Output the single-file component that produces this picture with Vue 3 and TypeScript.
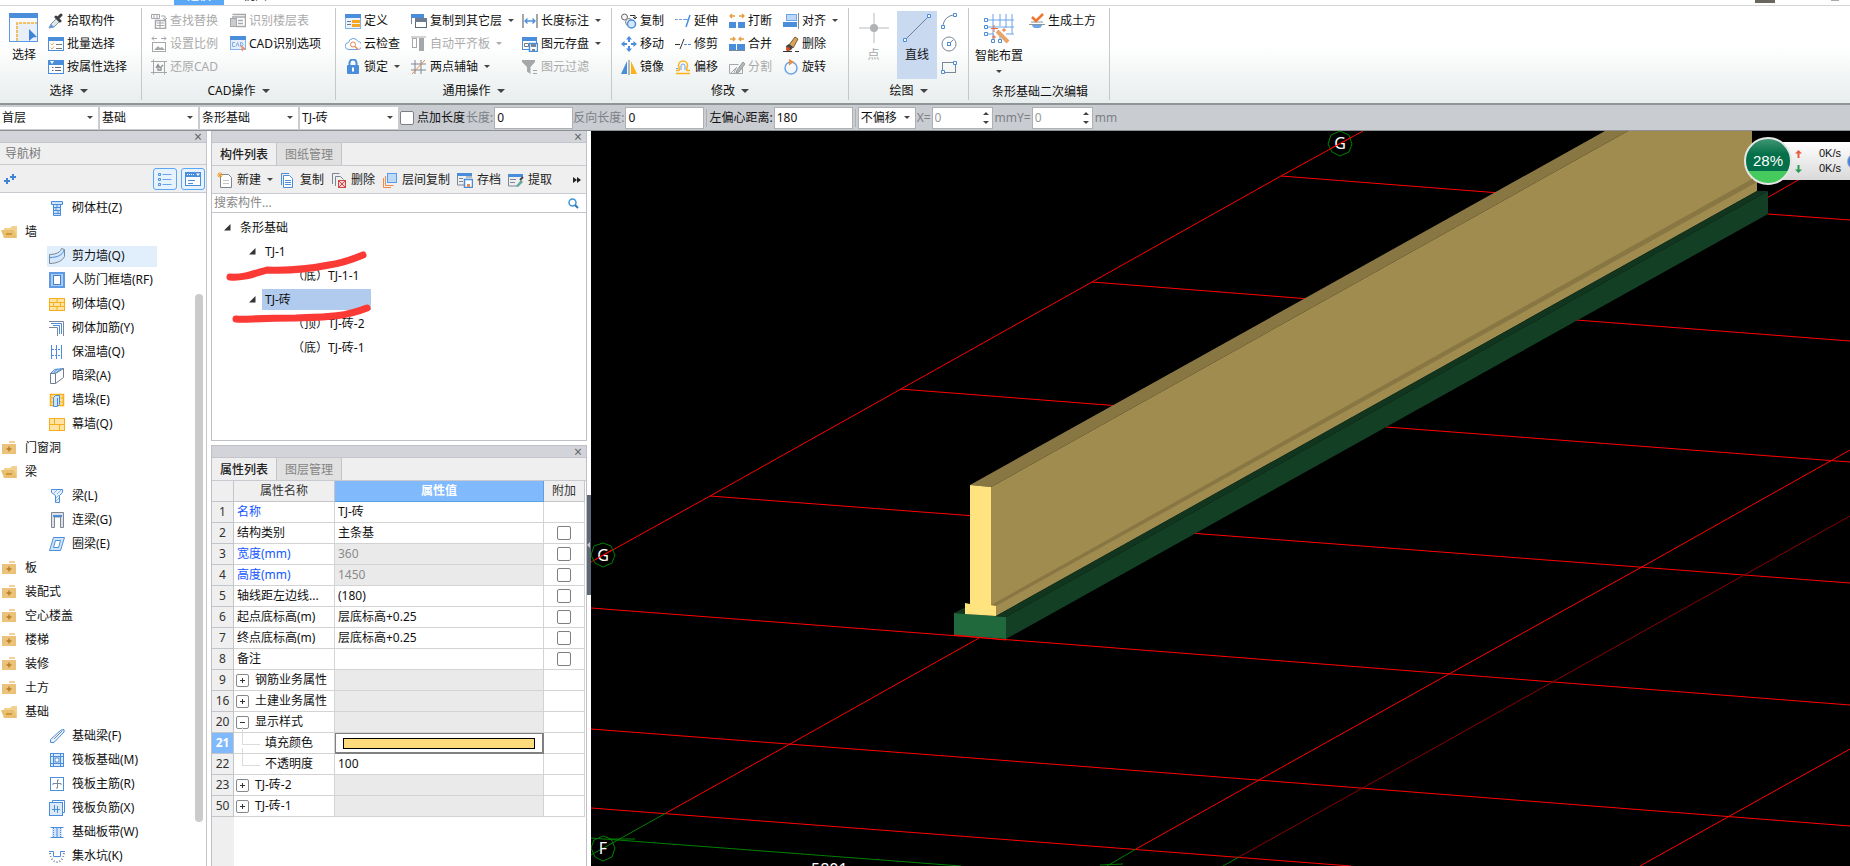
<script setup lang="ts">
import { ref } from 'vue'

interface Tool { icon: string; label: string; off?: boolean; caret?: boolean }
interface NavItem { label: string; icon: string; folder?: boolean; active?: boolean }
interface Prop {
  no: number
  name: string
  value?: string
  kind?: 'closed' | 'open' | 'child'
  blue?: boolean
  locked?: boolean
  check?: boolean
  swatch?: boolean
}

const B = '#4a8edb'
const G = '#a5a7aa'

const icons: Record<string, string> = {
  picker: `<path d="M1 15l2-4 6-6 3 3-6 6z" fill="#dfe7ee" stroke="#8a9299"/><path d="M1 15l2-4 3 3z" fill="#5b9ae6"/><path d="M8 4l4 4M9.500 5.500L13 2" stroke="#3b3f45" stroke-width="3" stroke-linecap="round"/>`,
  batch: `<rect x=".5" y="1.500" width="15" height="13" fill="#fff" stroke="${B}"/><path d="M0 1h16v4H0z" fill="${B}"/><path d="M2.500 7.500l1.500 1.500 2-2.500M2.500 11.500L4 13l2-2.500" fill="none" stroke="#f0a64a"/><path d="M8 8.500h6M8 12.500h6" stroke="#777"/>`,
  attr: `<rect x=".5" y="1.500" width="15" height="13" fill="#fff" stroke="${B}"/><path d="M0 1h16v5H0z" fill="${B}"/><path d="M2 2h4L4 5z" fill="#fff"/><path d="M4 8.500h1.500M7 8.500h6M4 11.500h1.500M7 11.500h6" stroke="#667"/>`,
  find: `<path d="M.5 1.500h8v4h-8zM3 1.500v4M6 1.500v4M10 3h4v3M12 5l2 2 2-2" fill="none" stroke="${G}"/><rect x="4.500" y="7.500" width="10" height="8" fill="#fff" stroke="${G}" stroke-width="1.500"/><path d="M6 10h7M6 12.500h7M9 8v7" stroke="${G}"/>`,
  scale: `<path d="M1 2.500h5M10 2.500h5M3 .5l-2 2 2 2M13 .5l2 2-2 2" fill="none" stroke="${G}"/><rect x="1.500" y="6.500" width="13" height="9" fill="#fff" stroke="${G}"/><path d="M3 14l4-4 2 2 2-1 3 3z" fill="${G}"/>`,
  restore: `<path d="M2.500.5v15M0 2.500h16M13.500 2v13.500M0 13.500h16" stroke="${G}"/><path d="M5 9l2-3.500L9 9M7 6v5h3V8l2-2" fill="none" stroke="#8d8f92" stroke-width="1.300"/>`,
  floors: `<path d="M2.500 1.500h13v12h-9M2 4h13" fill="none" stroke="${G}" stroke-width="1.500"/><rect x=".5" y="5.500" width="6" height="8" fill="#c9cbcd" stroke="${G}"/><path d="M8 7.500h5M8 10.500h5" stroke="${G}" stroke-width="1.500"/>`,
  cadopt: `<rect x=".5" y=".5" width="15" height="13" fill="#e4effb" stroke="#86b4ea"/><path d="M0 0h16v4H0z" fill="${B}"/><path d="M5 6.500H2.500v4H5M6 10.500L7.500 6.500 9 10.500M10.500 6.500v4h1.500l1-2-1-2z" fill="none" stroke="#86aee0"/><path d="M11 9l5 4-2.500.5L12 16z" fill="#f58f63"/>`,
  define: `<rect x=".5" y="1.500" width="15" height="14" fill="#eaf2fc" stroke="#86b4ea"/><path d="M0 1h16v4H0z" fill="${B}"/><path d="M2 8.500h4M2 11.500h4" stroke="#777"/><path d="M7 7h8v3H7zM7 11h8v3H7z" fill="#f5a623"/>`,
  cloud: `<path d="M4 13.500a3.500 3.500 0 0 1-.5-7A5 5 0 0 1 13 5.500a4 4 0 0 1-1 8z" fill="#fff" stroke="#6ba4e8"/><circle cx="8" cy="8.500" r="2.500" fill="none" stroke="#f0894a"/><path d="M10 10.500l3 3" stroke="#f0894a" stroke-width="1.500"/>`,
  lock: `<path d="M4.500 7V4a3.500 3.500 0 0 1 7 0v3" fill="none" stroke="${B}" stroke-width="2"/><rect x="2" y="6" width="12" height="9" rx="1" fill="${B}"/><path d="M7 8.500h2v4H7z" fill="#fff"/>`,
  copylayer: `<path d="M.5 11V1.500h12V4" fill="none" stroke="#7a8796"/><path d="M0 1h13v4H0z" fill="${B}"/><rect x="4.500" y="5.500" width="11" height="9" fill="#fff" stroke="#5b6a7b"/><path d="M4 5h12v4H4z" fill="#6d7c8e"/>`,
  alignslab: `<rect x="1.500" y="2.500" width="4" height="9" fill="none" stroke="${G}"/><path d="M0 1h15" stroke="${G}"/><rect x="8" y="2" width="5" height="13" fill="${G}"/>`,
  aux: `<path d="M4 1v14M10 1v14M0 5h15M0 11h15" stroke="#7b8794"/><path d="M1 15L14 1" stroke="#f0894a"/>`,
  dim: `<path d="M1 1v14M15 1v14" stroke="#777" stroke-width="1.300"/><path d="M3 8h10M5.500 5.500L3 8l2.500 2.500M10.500 5.500L13 8l-2.500 2.500" fill="none" stroke="${B}" stroke-width="1.300"/>`,
  store: `<rect x=".5" y="1.500" width="14" height="12" fill="#fff" stroke="${B}"/><path d="M0 1h15v4H0z" fill="${B}"/><path d="M2.500 7.500h4v3h-4z" fill="none" stroke="#777"/><rect x="7.500" y="7.500" width="8" height="8" fill="#fff" stroke="${B}" stroke-width="1.500"/><path d="M9 8h5v3H9zM10 13h3v2h-3z" fill="#74869a"/>`,
  filter: `<path d="M0 1h13v2L8.500 8v7L5 12.500V8L0 3z" fill="${G}"/><path d="M11 11.500h4M11 14.500h4" stroke="${G}"/>`,
  mcopy: `<circle cx="3.500" cy="4" r="3" fill="#f5f5f5" stroke="#666"/><path d="M9 2.500h5v3M12 4l2 2 2-2" fill="none" stroke="#333"/><circle cx="8" cy="9" r="3.500" fill="#e8eef4" stroke="#888"/><circle cx="10.500" cy="11" r="4" fill="#d5e8fb" stroke="${B}" stroke-width="1.500"/>`,
  move: `<path d="M8 0l3 3.500H9V6H7V3.500H5zM8 16l3-3.500H9V10H7v2.500H5zM0 8l3.500-3v2H6v2H3.500v2zM16 8l-3.500-3v2H10v2h2.500v2z" fill="${B}"/>`,
  mirror: `<path d="M6 2v13H0z" fill="${B}"/><path d="M8 1v15" stroke="#777"/><path d="M10 2v13h6z" fill="#fbb216"/>`,
  extend: `<path d="M0 6.500h3M4 6.500h3" stroke="#7fa0c4"/><path d="M8 6.500h5" stroke="#6aa2e5"/><path d="M15 2l-4 12" stroke="#4a8edb" stroke-width="1.500"/>`,
  trim: `<path d="M0 8.500h5" stroke="#333"/><path d="M9 8.500h3M13 8.500h3" stroke="${B}"/><path d="M9 3L5 13" stroke="#333"/>`,
  offset: `<path d="M1 14.500h14M1 11.500h3c1-2 0-3-.5-5a4.500 4.500 0 0 1 9 0c0 2-1.500 3-.5 5h3" fill="none" stroke="#fbb216" stroke-width="1.500"/><path d="M1 9.500h2M6 11V7a2 2 0 0 1 4 0v4" fill="none" stroke="#6ba4e8"/>`,
  brk: `<path d="M6 3H1M3 1L1 3l2 2M10 3h5M13 1l2 2-2 2" fill="none" stroke="#e89c3c" stroke-width="1.300"/><path d="M0 9h7v6H0zM9 9h7v6H9z" fill="${B}"/>`,
  merge: `<path d="M1 3h5M4 1l2 2-2 2M15 3h-5M12 1l-2 2 2 2" fill="none" stroke="#e89c3c" stroke-width="1.300"/><path d="M0 8h7v6H0zM8 8h8v6H8z" fill="${B}"/><path d="M0 14.500h16" stroke="#7b8794"/>`,
  split: `<path d="M.5 5.500h9M.5 5.500v9h13v-6M2 14l6-6M5 14l2-5" fill="none" stroke="${G}"/><path d="M8 11l-1 3 3-1 6-8-2-2z" fill="#b5b7ba" stroke="#999"/>`,
  align: `<rect x="3.500" y="1.500" width="10" height="6" fill="#bcd7f7" stroke="#6ba4e8"/><path d="M0 9h14v5H0z" fill="${B}"/><path d="M15.500 0v16" stroke="#888"/>`,
  erase: `<path d="M0 15.500h9M12 15.500h4" stroke="#333"/><path d="M6 9l6-8 3 2-5 9z" fill="#d9a35a" stroke="#7b5a32"/><path d="M3 10l3-2 4 3-2 3-4 1z" fill="#444"/><circle cx="5" cy="13" r="2" fill="#d84a20"/>`,
  rotate: `<circle cx="8" cy="9" r="6" fill="none" stroke="#6ba4e8" stroke-width="1.500"/><path d="M6 0l5 3-5 3.500z" fill="#f08a3c"/>`,
  arc: `<path d="M2 14C2 7 7 2 14 2" fill="none" stroke="#6d7f95"/><path d="M.5 12.500h3v3h-3zM12.500.5h3v3h-3z" fill="#fff" stroke="${B}"/>`,
  circle: `<circle cx="8" cy="8" r="7" fill="none" stroke="#7b8794"/><path d="M8 8l4-4" stroke="#7b8794"/><rect x="6.500" y="6.500" width="3" height="3" fill="#fff" stroke="${B}"/>`,
  rect: `<rect x="1.500" y="3.500" width="13" height="10" fill="none" stroke="#7b8794"/><path d="M.5 11.500h3v3h-3zM12.500 2.500h3v3h-3z" fill="#fff" stroke="${B}"/>`,
  earth: `<path d="M2 9h12M0 11.500h16" stroke="#8a949e"/><path d="M3 12h10c-1 3-2 3-5 3s-4 0-5-3z" fill="#6ba4e8"/><path d="M3 4l4 4 7-7" fill="none" stroke="#ee7430" stroke-width="2.500"/>`,
  folderOpen: `<path d="M3 4l6 0 2-2h5v11H4z" fill="#f3d08d"/><path d="M0 6h13l3 8H3z" fill="#e9bf70"/><path d="M5 10h6" stroke="#c38c2c" stroke-width="1.500"/>`,
  folder: `<path d="M8 1h6v2H8z" fill="#f0d29a"/><path d="M1 4h14v10H1z" fill="#ecc27b"/><path d="M8 6.500v5M5.500 9h5" stroke="#b57f26" stroke-width="1.500"/>`,
  column: `<path d="M2.500 1.500h11v3h-11zM4.500 4.500h7v11h-7z" fill="#cfe3f9" stroke="${B}"/><path d="M5 7.500h6M5 10.500h6M5 13.500h6M8 5v2M7 8v2M9 11v2" stroke="${B}"/>`,
  shear: `<path d="M.5 6.500C7 6.500 12 4 12.500.5l3 1v7c-2 4-7 7-15 7z" fill="#d5e7fb" stroke="#7b8794"/><path d="M1 9.500C8 9.500 14 7 15 2" fill="none" stroke="${B}"/>`,
  frame: `<path d="M1 1h14v14H1z" fill="#a9ccf5" stroke="#5e9be4" stroke-width="2"/><rect x="4.500" y="3.500" width="7" height="9" fill="#fff" stroke="#4a7fc4"/>`,
  brick: `<rect x=".5" y="2.500" width="15" height="12" fill="#fde3a4" stroke="#f7ae18"/><path d="M0 6.500h16M0 10.500h16M8 3v3M4.500 7v3M11.500 7v3M8 11v3" stroke="#f7ae18"/>`,
  rebar: `<path d="M0 1.500h14.500V16M0 7.500h8.500V16" fill="none" stroke="#7b8794"/><path d="M2 3.500h10.500V14M4 5.500h6.500V14" fill="none" stroke="${B}"/>`,
  insul: `<path d="M2.500 1v14M7.500 1v14M12.500 1v14" stroke="${B}"/><path d="M3 5.500h10M3 11.500h10" stroke="${B}" stroke-dasharray="2 1"/>`,
  hidden: `<path d="M1.500 5.500l4-4 9-1-4 4z" fill="#cfe3f9" stroke="${B}"/><path d="M1.500 5.500h5v10h-5zM6.500 5.500l8-5v9l-8 6" fill="#fff" stroke="#6f7f92"/><path d="M5 4l4-3M8 4l4-3" stroke="${B}"/>`,
  pier: `<rect x="1.500" y="2.500" width="13" height="11" fill="#fde3a4" stroke="#f7ae18" stroke-width="1.500"/><path d="M1 6h14M1 10h14" stroke="#f7ae18"/><path d="M4.500 5.500l2-2h4v9l-2 2h-4z" fill="#cfe3f9" stroke="${B}"/><path d="M8.500 6v8" stroke="${B}"/>`,
  curtain: `<rect x=".5" y="2.500" width="15" height="12" fill="#fde3a4" stroke="#f7ae18"/><path d="M0 8.500h16M5.500 3v5M10.500 9v5" stroke="#f7ae18"/>`,
  beam: `<path d="M2.500 1.500h11v3l-3 3v7h-4v-7l-4-3z" fill="#e6f0fc" stroke="${B}"/><path d="M5 5l3-3M8 6l4-4M7 10l3-3M7 13l3-3" stroke="#8ab6ec"/>`,
  lintel: `<path d="M2.500.5h12v15h-3V5h-6v10.500h-3z" fill="#dfe1e4" stroke="#7b8794"/><path d="M4 3h9v2H4z" fill="${B}"/>`,
  ring: `<path d="M4.500 1.500h11l-4 13H.5zM6.500 4.500h5l-2 7h-5z" fill="#cfe3f9" fill-rule="evenodd" stroke="${B}"/>`,
  fbeam: `<path d="M1.500 11.500L12 2l3-.5V4L5 14.500H1.500z" fill="#e6f0fc" stroke="${B}"/><path d="M5 11l8-8" stroke="#7b8794"/>`,
  raft: `<rect x="1.500" y="1.500" width="13" height="13" fill="#dbe9fa" stroke="${B}"/><path d="M1 4.500h14M1 11.500h14M4.500 1v13M11.500 1v13" stroke="${B}"/><rect x="6" y="6" width="4" height="4" fill="#fff" stroke="${B}"/>`,
  raftm: `<rect x="1.500" y="1.500" width="13" height="13" fill="#fff" stroke="${B}"/><path d="M4 9V7.500h8V9M7 12h1.500V4H10" fill="none" stroke="#7b8794"/>`,
  raftn: `<path d="M3.500 2V.5h12v12H14" fill="none" stroke="${B}"/><rect x=".5" y="2.500" width="13" height="13" fill="#dbe9fa" stroke="${B}"/><path d="M3 9.500h8M5.500 5v7M8.500 6v7" stroke="${B}"/>`,
  band: `<path d="M3 4h10v9H3z" fill="#d3e4f8"/><path d="M1.500 3.500h13M1.500 13.500h13M8 4v9" stroke="${B}"/><path d="M4.500 4v9M11.500 4v9" stroke="${B}" stroke-dasharray="1 1"/>`,
  pit: `<path d="M0 3.500h4.500v5h7v-5H16" fill="none" stroke="${B}"/><path d="M1 5c1 7 4 9 7 9s6-2 7-9" fill="none" stroke="#7b8794" stroke-dasharray="1 2" stroke-width="2"/>`,
  create: `<path d="M3.500 2.500h8l3 3v10h-11z" fill="#fff" stroke="#7b8794"/><path d="M6 8.500h6M6 11.500h6" stroke="#c3c8ce"/><path d="M1 1l4 4M5 1L1 5M3 0v6M0 3h6" stroke="#f0a030"/>`,
  dup: `<path d="M1.500 13V1.500H9" fill="none" stroke="${B}"/><path d="M3.500 3.500h6l3 3v9h-9z" fill="#fff" stroke="${B}"/><path d="M5 8.500h6M5 10.500h6M5 12.500h6" stroke="${B}"/>`,
  del: `<path d="M1.500 12V1.500h7M4.500 14V4.500h5l3 3" fill="none" stroke="#7b8794"/><rect x="7.500" y="8.500" width="7" height="7" fill="#f7d4d4" stroke="#d04848"/><path d="M8 9l6 6M14 9l-6 6" stroke="#d04848"/>`,
  layercopy: `<path d="M1.500 6v9.500H9M3.500 4v9.500h8" fill="none" stroke="#f0894a"/><rect x="5.500" y="1.500" width="9" height="9" fill="#bddafb" stroke="#5b9ae6"/>`,
  archive: `<path d="M0 1h15v3H0z" fill="${B}"/><path d="M.5 4v9h7M2 6.500h4M2 9.500h4M9 5h6" fill="none" stroke="#7b8794"/><rect x="7.500" y="7.500" width="8" height="8" fill="#fff" stroke="${B}" stroke-width="1.500"/><path d="M10 12h3v3h-3z" fill="#f0894a"/>`,
  extract: `<path d="M0 2h15v3H0z" fill="${B}"/><path d="M.5 5v9h9M2 7.500h6M2 10.500h5" fill="none" stroke="#7b8794"/><path d="M8 14l5-6 2 2-5 5z" fill="#5fa79c"/><path d="M12 8l3-3" stroke="#444" stroke-width="2"/>`,
}

const selectTools: Tool[] = [
  { icon: 'picker', label: '拾取构件' },
  { icon: 'batch', label: '批量选择' },
  { icon: 'attr', label: '按属性选择' },
]
const cadTools: Tool[] = [
  { icon: 'find', label: '查找替换', off: true },
  { icon: 'scale', label: '设置比例', off: true },
  { icon: 'restore', label: '还原CAD', off: true },
  { icon: 'floors', label: '识别楼层表', off: true },
  { icon: 'cadopt', label: 'CAD识别选项' },
]
const commonTools: Tool[] = [
  { icon: 'define', label: '定义' },
  { icon: 'cloud', label: '云检查' },
  { icon: 'lock', label: '锁定', caret: true },
  { icon: 'copylayer', label: '复制到其它层', caret: true },
  { icon: 'alignslab', label: '自动平齐板', off: true, caret: true },
  { icon: 'aux', label: '两点辅轴', caret: true },
  { icon: 'dim', label: '长度标注', caret: true },
  { icon: 'store', label: '图元存盘', caret: true },
  { icon: 'filter', label: '图元过滤', off: true },
]
const editTools: Tool[] = [
  { icon: 'mcopy', label: '复制' },
  { icon: 'move', label: '移动' },
  { icon: 'mirror', label: '镜像' },
  { icon: 'extend', label: '延伸' },
  { icon: 'trim', label: '修剪' },
  { icon: 'offset', label: '偏移' },
  { icon: 'brk', label: '打断' },
  { icon: 'merge', label: '合并' },
  { icon: 'split', label: '分割', off: true },
  { icon: 'align', label: '对齐', caret: true },
  { icon: 'erase', label: '删除' },
  { icon: 'rotate', label: '旋转' },
]
const shapeTools = [
  { icon: 'arc', label: '弧' },
  { icon: 'circle', label: '圆' },
  { icon: 'rect', label: '矩形' },
]
const partTools: Tool[] = [
  { icon: 'create', label: '新建', caret: true },
  { icon: 'dup', label: '复制' },
  { icon: 'del', label: '删除' },
  { icon: 'layercopy', label: '层间复制' },
  { icon: 'archive', label: '存档' },
  { icon: 'extract', label: '提取' },
]

const combos = [
  { label: '楼层', value: '首层' },
  { label: '分类', value: '基础' },
  { label: '构件类型', value: '条形基础' },
  { label: '构件', value: 'TJ-砖' },
]

const folder = (label: string, open = false): NavItem => ({ label, icon: open ? 'folderOpen' : 'folder', folder: true })
const nav: NavItem[] = [
  { label: '砌体柱(Z)', icon: 'column' },
  folder('墙', true),
  { label: '剪力墙(Q)', icon: 'shear', active: true },
  { label: '人防门框墙(RF)', icon: 'frame' },
  { label: '砌体墙(Q)', icon: 'brick' },
  { label: '砌体加筋(Y)', icon: 'rebar' },
  { label: '保温墙(Q)', icon: 'insul' },
  { label: '暗梁(A)', icon: 'hidden' },
  { label: '墙垛(E)', icon: 'pier' },
  { label: '幕墙(Q)', icon: 'curtain' },
  folder('门窗洞'),
  folder('梁', true),
  { label: '梁(L)', icon: 'beam' },
  { label: '连梁(G)', icon: 'lintel' },
  { label: '圈梁(E)', icon: 'ring' },
  folder('板'),
  folder('装配式'),
  folder('空心楼盖'),
  folder('楼梯'),
  folder('装修'),
  folder('土方'),
  folder('基础', true),
  { label: '基础梁(F)', icon: 'fbeam' },
  { label: '筏板基础(M)', icon: 'raft' },
  { label: '筏板主筋(R)', icon: 'raftm' },
  { label: '筏板负筋(X)', icon: 'raftn' },
  { label: '基础板带(W)', icon: 'band' },
  { label: '集水坑(K)', icon: 'pit' },
]

const parts = [
  { label: '条形基础', depth: 0, open: true },
  { label: 'TJ-1', depth: 1, open: true },
  { label: '（底）TJ-1-1', depth: 2 },
  { label: 'TJ-砖', depth: 1, open: true, active: true },
  { label: '（顶）TJ-砖-2', depth: 2 },
  { label: '（底）TJ-砖-1', depth: 2 },
]

const props: Prop[] = [
  { no: 1, name: '名称', value: 'TJ-砖', blue: true },
  { no: 2, name: '结构类别', value: '主条基', check: true },
  { no: 3, name: '宽度(mm)', value: '360', blue: true, locked: true, check: true },
  { no: 4, name: '高度(mm)', value: '1450', blue: true, locked: true, check: true },
  { no: 5, name: '轴线距左边线...', value: '(180)', check: true },
  { no: 6, name: '起点底标高(m)', value: '层底标高+0.25', check: true },
  { no: 7, name: '终点底标高(m)', value: '层底标高+0.25', check: true },
  { no: 8, name: '备注', check: true },
  { no: 9, name: '钢筋业务属性', kind: 'closed', locked: true },
  { no: 16, name: '土建业务属性', kind: 'closed', locked: true },
  { no: 20, name: '显示样式', kind: 'open', locked: true },
  { no: 21, name: '填充颜色', kind: 'child', swatch: true },
  { no: 22, name: '不透明度', value: '100', kind: 'child' },
  { no: 23, name: 'TJ-砖-2', kind: 'closed', locked: true },
  { no: 50, name: 'TJ-砖-1', kind: 'closed', locked: true },
]

const redLines = [
  'M591 562L710 496L1092 282L1281 176L1363 131',
  'M1281 176L1500 193M1768 214L1850 220',
  'M1092 282L1310 299M1576 320L1850 341',
  'M900 389L1120 406M1386 427L1850 462',
  'M710 496L975 516M1190 533L1850 583',
  'M591 608L1090 646L1850 705',
  'M591 729L1090 767L1850 826',
  'M591 808L1090 846L1351 866',
  'M666 813L790 744L979 638M1765 199L1800 179',
  'M1136 849L1259 780L1449 674L1640 568L1850 450',
  'M1640 866L1850 749',
]

const search = ref('')
const addLength = ref(false)
</script>

<template>
  <div class="app">
    <nav class="menu">
      <button class="menu-tab on">建模</button>
      <button class="menu-tab">视图</button>
      <span class="menu-end"><i class="avatar"></i><i class="dots"></i></span>
    </nav>

    <header class="ribbon">
      <section class="group g-select">
        <div class="body">
          <button class="big">
            <svg width="30" height="30" viewBox="0 0 30 30"><rect x=".5" y=".5" width="28" height="28" fill="#e9eff8" stroke="#5b9ae6" /><path d="M0 0h29v5H0z" fill="#4a8edb" /><path d="M1 5h27v5H7v18H1z" fill="#f7f9fc" /><path d="M8 28V10h20" fill="none" stroke="#f5b32a" stroke-width="1.500" stroke-dasharray="3 1" /><path d="M20 16l8 8-4 .5-4 3.500z" fill="#3f84d8" /></svg>
            <span>选择</span>
          </button>
          <div class="tools">
            <button v-for="t in selectTools" :key="t.icon" class="tool">
              <svg width="16" height="16" viewBox="0 0 16 16" v-html="icons[t.icon]"></svg><span>{{ t.label }}</span>
            </button>
          </div>
        </div>
        <h2>选择 <i class="caret"></i></h2>
      </section>

      <section class="group g-cad">
        <div class="body">
          <div class="tools">
            <button v-for="t in cadTools" :key="t.icon" class="tool" :disabled="t.off">
              <svg width="16" height="16" viewBox="0 0 16 16" v-html="icons[t.icon]"></svg><span>{{ t.label }}</span>
            </button>
          </div>
        </div>
        <h2>CAD操作 <i class="caret"></i></h2>
      </section>

      <section class="group g-common">
        <div class="body">
          <div class="tools">
            <button v-for="t in commonTools" :key="t.icon" class="tool" :disabled="t.off">
              <svg width="16" height="16" viewBox="0 0 16 16" v-html="icons[t.icon]"></svg><span>{{ t.label }}</span><i v-if="t.caret" class="caret small"></i>
            </button>
          </div>
        </div>
        <h2>通用操作 <i class="caret"></i></h2>
      </section>

      <section class="group g-edit">
        <div class="body">
          <div class="tools">
            <button v-for="t in editTools" :key="t.icon" class="tool" :disabled="t.off">
              <svg width="16" height="16" viewBox="0 0 16 16" v-html="icons[t.icon]"></svg><span>{{ t.label }}</span><i v-if="t.caret" class="caret small"></i>
            </button>
          </div>
        </div>
        <h2>修改 <i class="caret"></i></h2>
      </section>

      <section class="group g-draw">
        <div class="body">
          <button class="big" disabled>
            <svg width="30" height="30" viewBox="0 0 30 30"><path d="M15 0v30M0 15h30" stroke="#b9bbbe" /><circle cx="15" cy="15" r="4" fill="#b0b2b5" /></svg>
            <span>点</span>
          </button>
          <button class="big on">
            <svg width="30" height="30" viewBox="0 0 30 30"><path d="M3 27L27 3" stroke="#6d7f95" /><path d="M1.500 25.500h3v3h-3zM25.500 1.500h3v3h-3z" fill="#fff" stroke="#4a8edb" /></svg>
            <span>直线</span>
          </button>
          <div class="shapes">
            <button v-for="s in shapeTools" :key="s.icon" class="tool" :aria-label="s.label">
              <svg width="16" height="16" viewBox="0 0 16 16" v-html="icons[s.icon]"></svg>
            </button>
          </div>
        </div>
        <h2>绘图 <i class="caret"></i></h2>
      </section>

      <section class="group g-second">
        <div class="body">
          <button class="big wide">
            <svg width="30" height="30" viewBox="0 0 30 30"><path d="M4 6h26M4 13h26M4 20h6M9 0v26M16 0v12M22 0v14M28 0v20M22 20h8M16 22v4" stroke="#6ba4e8" fill="none" /><path d="M.5 4.500h3v3h-3zM.5 11.500h3v3h-3zM.5 18.500h3v3h-3zM7.500 25.500h3v3h-3zM14.500 25.500h3v3h-3z" fill="#fff" stroke="#4a8edb" /><path d="M13 17l11 11" stroke="#e8a56a" stroke-width="4" /><path d="M10 11v7M7 14.500h7M20 14v4M18 16h4M10 21v4M8 23h4" stroke="#ee6a3a" /></svg>
            <span>智能布置</span><i class="caret small"></i>
          </button>
          <div class="tools">
            <button class="tool">
              <svg width="16" height="16" viewBox="0 0 16 16" v-html="icons.earth"></svg><span>生成土方</span>
            </button>
          </div>
        </div>
        <h2>条形基础二次编辑</h2>
      </section>
    </header>

    <div class="options">
      <span v-for="c in combos" :key="c.label" class="combo">
        <select :aria-label="c.label"><option>{{ c.value }}</option></select><i class="caret small"></i>
      </span>
      <label class="check"><input v-model="addLength" type="checkbox" />点加长度</label>
      <label class="dim" for="len">长度:</label><input id="len" class="field" value="0" />
      <label class="dim" for="rlen">反向长度:</label><input id="rlen" class="field" value="0" />
      <i class="bar"></i>
      <label for="ecc">左偏心距离:</label><input id="ecc" class="field" value="180" />
      <i class="bar"></i>
      <span class="combo short">
        <select aria-label="偏移方式"><option>不偏移</option></select><i class="caret small"></i>
      </span>
      <label class="dim" for="ox">X=</label>
      <span class="spin"><input id="ox" type="number" value="0" disabled /><span><i class="up"></i><i class="caret small"></i></span></span>
      <span class="dim">mm</span>
      <label class="dim" for="oy">Y=</label>
      <span class="spin"><input id="oy" type="number" value="0" disabled /><span><i class="up"></i><i class="caret small"></i></span></span>
      <span class="dim">mm</span>
    </div>

    <main class="work">
      <aside class="side">
        <div class="grip"><button aria-label="关闭导航树">×</button></div>
        <h3>导航树</h3>
        <div class="side-tools">
          <button class="plus" aria-label="展开"><svg width="14" height="12" viewBox="0 0 14 12"><path d="M3 5v6M0 8h6M9 1v6M6 4h6" stroke="#3f84d8" stroke-width="2" /></svg></button>
          <button class="mode" aria-label="列表"><svg width="14" height="14" viewBox="0 0 14 14"><path d="M4.500 2.500h9M4.500 7.500h9M4.500 12.500h9" stroke="#6ba4e8" /><path d="M.5 1.500h2v2h-2zM.5 6.500h2v2h-2zM.5 11.500h2v2h-2z" fill="none" stroke="#4a8edb" /></svg></button>
          <button class="mode" aria-label="图标"><svg width="16" height="14" viewBox="0 0 16 14"><rect x=".5" y=".5" width="15" height="13" fill="#fff" stroke="#4a8edb" /><path d="M0 0h16v5H0z" fill="#4a8edb" /><path d="M2 2.500h7" stroke="#fff" stroke-dasharray="1 1" /><path d="M11 1.500h4L13 4z" fill="#fff" /><path d="M3 8.500h7M3 11.500h5" stroke="#4a8edb" /></svg></button>
        </div>
        <div class="side-body">
          <ul class="nav">
            <li v-for="n in nav" :key="n.label" :class="{ folder: n.folder }">
              <a href="#" :class="{ on: n.active }"><svg width="16" height="16" viewBox="0 0 16 16" v-html="icons[n.icon]"></svg>{{ n.label }}</a>
            </li>
          </ul>
          <div class="scroll"><i></i></div>
        </div>
      </aside>

      <div class="mid">
        <section class="panel parts">
          <div class="grip"><button aria-label="关闭构件列表">×</button></div>
          <div class="tabs"><button class="on">构件列表</button><button>图纸管理</button></div>
          <div class="part-tools">
            <button v-for="t in partTools" :key="t.icon" class="tool">
              <svg width="16" height="16" viewBox="0 0 16 16" v-html="icons[t.icon]"></svg><span>{{ t.label }}</span><i v-if="t.caret" class="caret small"></i>
            </button>
            <button class="more" aria-label="更多"><svg width="8" height="6" viewBox="0 0 8 6"><path d="M0 0l4 3-4 3zM4 0l4 3-4 3z" fill="#222" /></svg></button>
          </div>
          <div class="search">
            <input v-model="search" type="text" placeholder="搜索构件..." aria-label="搜索构件" />
            <svg width="11" height="11" viewBox="0 0 11 11"><circle cx="4.500" cy="4.500" r="3.500" fill="none" stroke="#3f97d8" stroke-width="1.500" /><path d="M7 7l3 3" stroke="#2d78b8" stroke-width="2" /></svg>
          </div>
          <ul class="tree">
            <li v-for="p in parts" :key="p.label" :class="'d' + p.depth">
              <svg v-if="p.open" width="7" height="7" viewBox="0 0 7 7"><path d="M6.500 0v6.500H0z" fill="#333" /></svg>
              <a href="#" :class="{ on: p.active }">{{ p.label }}</a>
            </li>
          </ul>
          <svg class="marks" width="150" height="76" viewBox="0 0 150 76">
            <path d="M5 28c12 1 20-2 37-7 24 1 42-1 62-5 14-2 22-5 34-10M11 70c10 1 18-1 60-1 32-1 48-1 71-10" fill="none" stroke="#fb3a36" stroke-width="7" stroke-linecap="round" stroke-linejoin="round" />
          </svg>
        </section>

        <section class="panel attrs">
          <div class="grip"><button aria-label="关闭属性列表">×</button></div>
          <div class="tabs"><button class="on">属性列表</button><button>图层管理</button></div>
          <div class="grid">
            <table>
              <colgroup><col class="c-no" /><col class="c-name" /><col /><col class="c-add" /></colgroup>
              <thead><tr><th></th><th>属性名称</th><th class="on">属性值</th><th>附加</th></tr></thead>
              <tbody>
                <tr v-for="p in props" :key="p.no" :class="{ sel: p.swatch }">
                  <th scope="row">{{ p.no }}</th>
                  <td :class="['name', p.kind, { blue: p.blue }]">
                    <span class="cell"><button v-if="p.kind === 'closed' || p.kind === 'open'" class="fold" :aria-label="p.name"><svg width="7" height="7" viewBox="0 0 7 7"><path :d="p.kind === 'open' ? 'M1 3.5h5' : 'M1 3.5h5M3.500 1v5'" stroke="#333" /></svg></button>{{ p.name }}</span>
                  </td>
                  <td :class="['val', { locked: p.locked }]"><button v-if="p.swatch" class="swatch" aria-label="填充颜色"></button>{{ p.value }}</td>
                  <td class="add"><input v-if="p.check" type="checkbox" :aria-label="p.name + ' 附加'" /></td>
                </tr>
              </tbody>
            </table>
          </div>
        </section>
      </div>

      <div class="splitter"><button aria-label="收起面板"><svg width="3" height="6" viewBox="0 0 3 6"><path d="M3 0v6L0 3z" fill="#c3c8ce" /></svg></button></div>

      <div class="view">
        <svg class="scene" viewBox="591 131 1259 735" preserveAspectRatio="xMinYMin slice">
          <g fill="none" stroke="#ff0000">
            <path v-for="d in redLines" :key="d" :d="d" />
          </g>
          <path d="M1239 857L1850 516" stroke="#8a0000" fill="none" />
          <path d="M591 838L961 866M610 839h25M591 855L666 813M1107 866L1136 849M1100 865L1123 864M1223 866L1239 857" stroke="#008000" fill="none" />
          <path d="M970 485L1605 131H1628L991 487z" fill="#897743" />
          <path d="M991 487L1628 131H1752V181L1757 182V191L996 616V606L991 605z" fill="#a08c4f" />
          <path d="M991 605L1752 179L1757 182L996 606z" fill="#897743" />
          <path d="M954 613L966 607L996 616L1757 191H1768L1006 617z" fill="#11351f" />
          <path d="M1006 617L1768 191V214L1006 639z" fill="#134024" />
          <path d="M954 613L1006 617V639L954 635z" fill="#20693c" />
          <path d="M970 485L991 487V605L996 606V616L965 614V603L970 604z" fill="#ffe37f" />
          <path d="M954 635L1006 640" stroke="#ff0000" />
          <g fill="none" stroke="#008000">
            <path d="M603 543l8 3 4 9-3 8-9 4-8-4-4-8 3-9z" />
            <path d="M1340 131l9 4 3 9-3 8-9 4-8-4-4-8 3-9z" />
            <path d="M603 836l8 3 4 9-3 9-9 4-8-4-4-9 3-8z" />
          </g>
          <g class="axis" text-anchor="middle"><text x="603" y="561">G</text><text x="1340" y="149">G</text><text x="603" y="854">F</text></g>
          <text class="axis" x="811" y="875">5801</text>
          <path d="M596 559L612 550M1330 149L1352 137" stroke="#ff0000" />
        </svg>
        <div class="monitor">
          <div class="rates">
            <span><svg width="7" height="8" viewBox="0 0 7 8"><path d="M3.500 0L7 3.500H4.500V8h-2V3.500H0z" fill="#ea5a3d" /></svg>0K/s</span>
            <span><svg width="7" height="8" viewBox="0 0 7 8"><path d="M3.500 8L0 4.500h2.500V0h2v4.500H7z" fill="#259c50" /></svg>0K/s</span>
          </div>
          <div class="ball">28%</div>
          <i class="knob"></i>
        </div>
      </div>
    </main>
  </div>
</template>

<style>
html, body { margin: 0; height: 100%; overflow: hidden; }
</style>

<style scoped>
.app { display: flex; flex-direction: column; height: 100vh; overflow: hidden; background: #fff; color: #111; font: 12px/16px "Noto Sans", "Noto Sans CJK SC", sans-serif; }
.app * { box-sizing: border-box; }
button, input, select { font: inherit; color: inherit; margin: 0; padding: 0; border: 0; background: none; border-radius: 0; outline: 0; }
h2, h3, ul { margin: 0; padding: 0; font: inherit; list-style: none; }
svg { flex: none; display: block; }
a { color: inherit; text-decoration: none; }
i { flex: none; }

.caret { display: inline-block; border: 4px solid transparent; border-top-color: #444; border-bottom: 0; }
.caret.small { border-width: 3px; border-bottom: 0; }

.menu { display: flex; align-items: flex-end; flex: none; height: 6px; padding-left: 174px; overflow: hidden; border-bottom: 1px solid #d6d6d6; }
.menu-tab { width: 50px; height: 17px; padding-bottom: 1px; flex: none; }
.menu-tab.on { background: #5aa7f7; color: #fff; }
.menu-tab:not(.on) { margin-left: 6px; }
.menu-end { display: flex; gap: 56px; margin-left: auto; padding-right: 11px; height: 5px; }
.avatar { width: 20px; height: 3px; background: #6b6560; }
.dots { width: 8px; height: 1px; background: #aaa; }

.ribbon { display: flex; flex: none; height: 99px; padding-top: 2px; background: linear-gradient(#fff 40%, #e8eded); border-bottom: 2px solid #8f9494; }
.group { display: flex; flex-direction: column; height: 92px; border-right: 1px solid #c6c9cc; padding-top: 1px; }
.body { display: flex; flex: none; height: 69px; }
.tools { display: grid; grid-template-rows: repeat(3, 23px); grid-auto-flow: column; justify-content: start; }
.tool { display: flex; align-items: center; gap: 3px; white-space: nowrap; text-align: left; }
.tool .caret { margin-left: 3px; }
.tool:disabled, .big:disabled { color: #aaa; }
.tool:disabled .caret { border-top-color: #aaa; }
.group h2 { display: flex; align-items: center; justify-content: center; gap: 6px; height: 22px; padding-top: 4px; }
.big { display: flex; flex-direction: column; align-items: center; width: 48px; padding: 4px 0 0; flex: none; }
.big span { margin-top: 4px; white-space: nowrap; }
.big .caret { margin-top: 6px; }
.g-select { width: 142px; }
.g-select h2 { margin-right: 4px; }
.g-cad { width: 194px; padding-left: 9px; }
.g-cad .tools { grid-template-columns: 79px auto; }
.g-cad h2, .g-common h2 { margin-right: 9px; }
.g-common { width: 276px; padding-left: 9px; }
.g-common .tools { grid-template-columns: 66px 111px auto; }
.g-edit { width: 237px; padding-left: 9px; }
.g-edit .tools { grid-template-columns: repeat(4, 54px); }
.g-edit h2 { margin-right: 9px; }
.g-draw { width: 120px; }
.g-draw .body { padding-left: 1px; }
.g-draw .big { width: 47px; }
.g-draw .big.on { width: 40px; height: 68px; margin-top: 2px; padding-top: 2px; background: #c9d9f0; }
.shapes { display: grid; grid-template-rows: repeat(3, 23px); margin-left: 4px; }
.g-second { width: 141px; padding-left: 6px; }
.g-second h2 { padding-top: 6px; margin-right: 4px; }
.big.wide { padding-top: 5px; margin-right: 6px; }

.options { display: flex; align-items: center; flex: none; height: 26px; background: #c9ccd1; border-bottom: 1px solid #8d9095; white-space: nowrap; }
.combo { display: flex; align-items: center; width: 98px; height: 22px; margin-right: 2px; background: #fff; position: relative; flex: none; }
.combo select { appearance: none; width: 100%; height: 22px; padding-left: 2px; }
.combo .caret { position: absolute; right: 5px; }
.combo.short { width: 58px; margin: 0 1px 0 0; border: 1px solid #aeb0b4; }
.dim { color: #7d8085; }
.check { display: flex; align-items: center; gap: 3px; margin-right: 1px; }
input[type="checkbox"] { appearance: none; width: 14px; height: 14px; border: 1px solid #7d7f83; border-radius: 2px; background: #fff; flex: none; }
.field { width: 79px; height: 22px; margin: 0 0 0 1px; padding-left: 2px; background: #fff; border: 1px solid #aeb0b4; }
.bar { width: 1px; height: 18px; margin: 0 2px; background: #aeb0b4; }
.spin { display: flex; width: 61px; height: 22px; margin: 0 2px 0 1px; background: #fff; border: 1px solid #aeb0b4; }
.spin input { flex: 1; min-width: 0; padding-left: 2px; color: #999; appearance: textfield; }
.spin span { display: flex; flex-direction: column; justify-content: space-between; padding: 4px 3px 4px 0; }
.up { border: 3px solid transparent; border-bottom-color: #444; border-top: 0; }

.work { display: flex; flex: 1; min-height: 0; }
.grip { display: flex; flex: none; justify-content: flex-end; height: 12px; background: #d3d4da; border-bottom: 1px solid #c4c5ca; }
.grip button { width: 14px; margin-right: 1px; font-size: 14px; line-height: 10px; color: #666; }
.side { display: flex; flex-direction: column; width: 207px; flex: none; border-right: 1px solid #c3c5ca; }
.side h3 { height: 22px; flex: none; padding-left: 5px; line-height: 22px; color: #777; background: #efefef; border-bottom: 1px solid #c9cad0; }
.side-tools { display: flex; align-items: center; gap: 4px; flex: none; height: 28px; padding: 0 1px 0 4px; background: #efefef; border-bottom: 1px solid #c9cad0; }
.plus { margin-right: auto; }
.mode { display: flex; align-items: center; justify-content: center; width: 24px; height: 22px; border: 1px solid #5aa7f7; border-radius: 3px; background: #e6f2fe; }
.side-body { display: flex; flex: 1; min-height: 0; overflow: hidden; }
.nav { flex: 1; padding-top: 3px; }
.nav li { display: flex; align-items: center; height: 24px; padding-left: 47px; }
.nav li.folder { padding-left: 0; }
.nav a { display: flex; align-items: center; gap: 7px; width: 110px; height: 21px; padding-left: 2px; white-space: nowrap; }
.nav .folder a { padding-left: 1px; gap: 8px; }
.nav a.on { background: #e1effd; }
.scroll { width: 11px; display: flex; align-items: flex-start; padding: 101px 3px 44px 0; }
.scroll i { width: 8px; height: 100%; border-radius: 4px; background: #cbcbcb; }

.mid { display: flex; flex-direction: column; gap: 4px; width: 376px; margin-left: 4px; flex: none; }
.panel { display: flex; flex-direction: column; border: 1px solid #bfc0c5; border-top: 0; }
.parts { height: 310px; flex: none; position: relative; }
.attrs { flex: 1; min-height: 0; overflow: hidden; border-bottom: 0; border-top: 1px solid #bfc0c5; }
.tabs { display: flex; flex: none; height: 23px; background: #efefef; border-bottom: 1px solid #c9cad0; }
.tabs button { width: 65px; padding-top: 1px; border-right: 1px solid #c3c5ca; background: #e0e0e0; color: #858585; }
.tabs button.on { background: #efefef; color: #222; font-weight: 500; }
.part-tools { display: flex; align-items: center; flex: none; height: 28px; padding-left: 5px; background: #efefef; border-bottom: 1px solid #c9cad0; color: #222; }
.part-tools .tool { gap: 4px; margin-right: 7px; }
.part-tools .tool .caret { margin-left: 2px; }
.more { margin: 0 5px 0 auto; }
.search { display: flex; align-items: center; flex: none; height: 19px; padding: 0 7px 0 2px; border-bottom: 1px solid #c3c5ca; }
.search input { flex: 1; min-width: 0; height: 16px; }
.search input::placeholder { color: #888; opacity: 1; }
.tree { padding-top: 2px; }
.tree li { display: flex; align-items: center; height: 24px; }
.tree .d0 { padding-left: 12px; }
.tree .d1 { padding-left: 37px; }
.tree .d2 { padding-left: 71px; }
.tree a { margin-left: 6px; padding-left: 3px; line-height: 21px; }
.tree a.on { width: 109px; background: #b0cbed; }
.marks { position: absolute; left: 13px; top: 118px; pointer-events: none; }

.grid { flex: 1; background: linear-gradient(90deg, #efefef 22px, #fff 22px); }
table { width: calc(100% - 1px); table-layout: fixed; border-spacing: 0; }
.c-no { width: 22px; }
.c-name { width: 101px; }
.c-add { width: 41px; }
th, td { height: 21px; padding: 0; border: 0 solid #d3d3d3; border-width: 0 1px 1px 0; line-height: 16px; font-weight: 400; white-space: nowrap; background: #fff; }
th { background: #efefef; border-color: #c3c5ca; color: #333; text-align: center; }
th.on { background: #80bafc; border-color: #5f9fe6; color: #fff; font-weight: 700; }
.sel th { background: #80bafc; color: #fff; font-weight: 700; }
.name { position: relative; padding-left: 3px; }
.cell { display: flex; align-items: center; }
.name.closed, .name.open { padding-left: 2px; }
.name.child { padding-left: 31px; }
.name.child::before { content: ""; position: absolute; left: 8px; top: -6px; width: 17px; height: 17px; border: solid #dcdcdc; border-width: 0 0 1px 1px; }
.name.blue { color: #1557ff; }
.fold { display: flex; align-items: center; justify-content: center; flex: none; width: 13px; height: 13px; margin-right: 6px; border: 1px solid #888; border-radius: 2px; background: #fff; }
.val { padding-left: 3px; }
.val.locked { background: #eaeaea; color: #8a8a8a; }
.sel .val { padding: 0 8px; border-color: #808080; box-shadow: inset 1px 1px #808080, inset -1px -1px #808080; }
.swatch { display: block; width: 100%; height: 11px; background: #ffdc7b; border: 1px solid #000; }
.add { text-align: center; }
.add input { display: block; margin: 0 auto; }

.splitter { display: flex; width: 4px; flex: none; padding-top: 364px; align-items: flex-start; }
.splitter button { display: flex; align-items: center; width: 4px; height: 100px; background: #5d6876; }

.view { position: relative; flex: 1; min-width: 0; background: #000; overflow: hidden; }
.scene { width: 100%; height: 100%; }
.axis { font-size: 16px; fill: #fff; }
.monitor { position: absolute; right: 0; top: 6px; display: flex; align-items: center; height: 48px; width: 106px; }
.ball { position: absolute; left: 0; top: 0; width: 48px; height: 48px; border: 2px solid #e6e6e6; border-radius: 50%; background: linear-gradient(#3f9672 0, #04704a 35%, #04704a 73%, #45cb5d 73%); color: #fff; font: 15px/44px "Liberation Sans", sans-serif; text-align: center; }
.rates { display: flex; flex-direction: column; justify-content: center; width: 82px; height: 38px; margin-left: auto; background: linear-gradient(#fff, #d9d9d9); font: 11px/15px "Liberation Sans", sans-serif; }
.rates span { display: flex; align-items: center; justify-content: space-between; padding: 0 9px 0 27px; }
.knob { position: absolute; right: -14px; top: 16px; width: 17px; height: 17px; border-radius: 50%; background: #3f84e0; border: 1px solid #aac; }
</style>
